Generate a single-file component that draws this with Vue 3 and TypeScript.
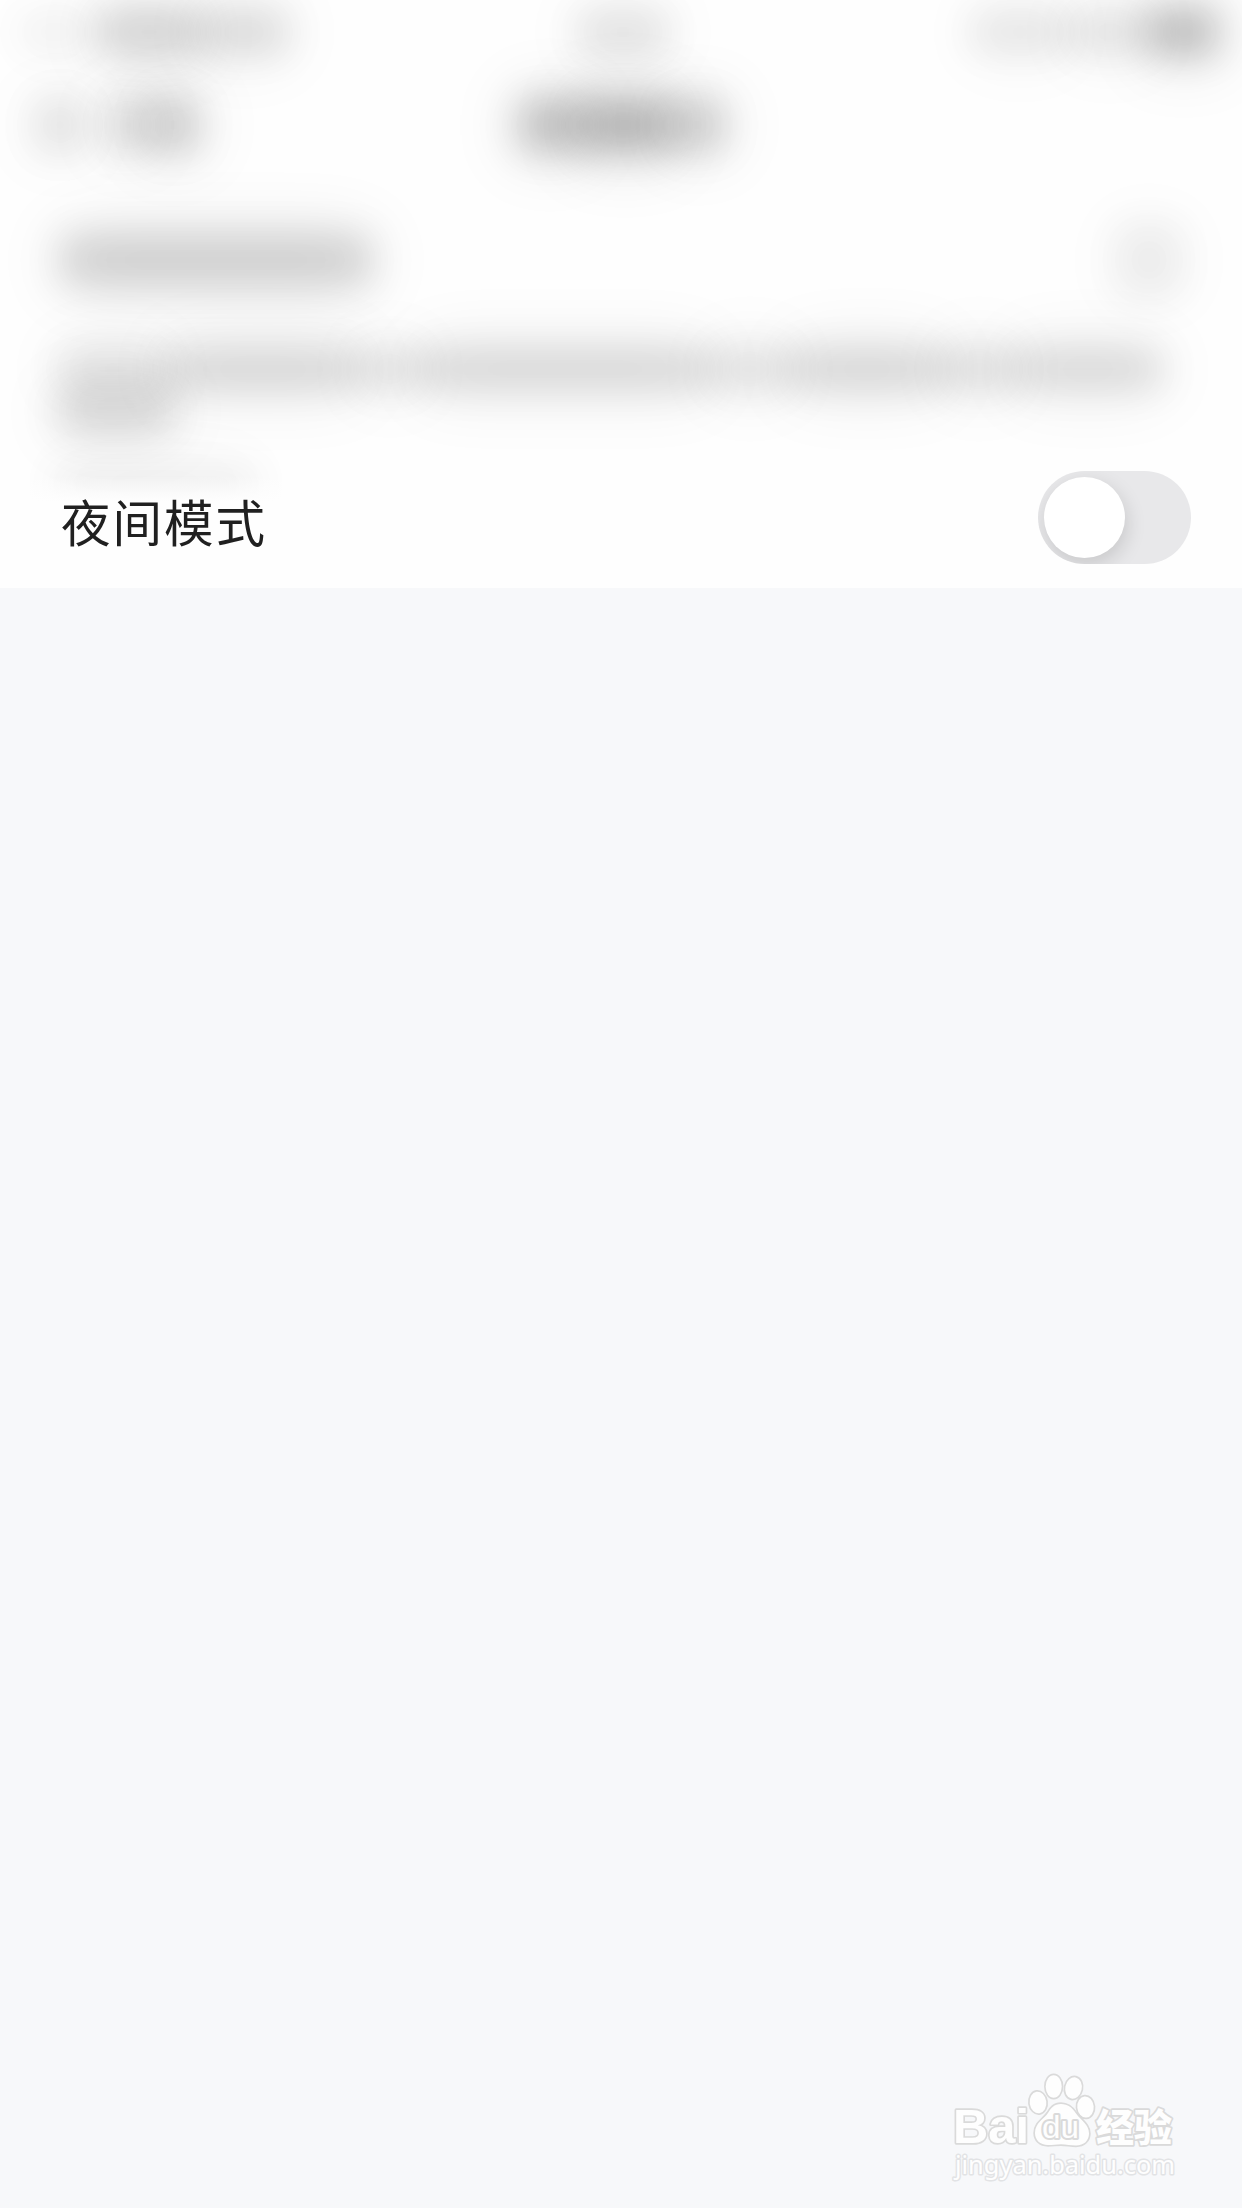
<script setup lang="ts">
import { ref } from 'vue'

interface Smudge {
  gap: number
  width: number
  height: number
  tone: number
}

interface HazeRow {
  height: number
  marks: Smudge[]
}

const nightMode = ref(false)

const hazeRows: HazeRow[] = [
  {
    height: 64,
    marks: [
      { gap: 20, width: 70, height: 34, tone: 0.05 },
      { gap: 8, width: 102, height: 42, tone: 0.16 },
      { gap: 0, width: 88, height: 42, tone: 0.125 },
      { gap: 290, width: 90, height: 38, tone: 0.11 },
      { gap: 304, width: 96, height: 38, tone: 0.09 },
      { gap: 0, width: 84, height: 38, tone: 0.1 },
      { gap: 0, width: 64, height: 42, tone: 0.27 },
    ],
  },
  {
    height: 122,
    marks: [
      { gap: 36, width: 48, height: 54, tone: 0.1 },
      { gap: 24, width: 40, height: 54, tone: 0.13 },
      { gap: 0, width: 50, height: 54, tone: 0.18 },
      { gap: 322, width: 60, height: 50, tone: 0.23 },
      { gap: 0, width: 90, height: 50, tone: 0.26 },
      { gap: 0, width: 54, height: 50, tone: 0.18 },
    ],
  },
  {
    height: 148,
    marks: [
      { gap: 61, width: 310, height: 50, tone: 0.152 },
      { gap: 745, width: 66, height: 74, tone: 0.055 },
    ],
  },
  {
    height: 70,
    marks: [
      { gap: 58, width: 108, height: 38, tone: 0.1 },
      { gap: 0, width: 194, height: 38, tone: 0.145 },
      { gap: 0, width: 60, height: 38, tone: 0.11 },
      { gap: 0, width: 290, height: 38, tone: 0.14 },
      { gap: 0, width: 80, height: 38, tone: 0.11 },
      { gap: 0, width: 154, height: 38, tone: 0.145 },
      { gap: 0, width: 70, height: 38, tone: 0.125 },
      { gap: 0, width: 148, height: 38, tone: 0.135 },
    ],
  },
  {
    height: 14,
    marks: [{ gap: 58, width: 116, height: 40, tone: 0.14 }],
  },
  {
    height: 132,
    marks: [{ gap: 56, width: 200, height: 26, tone: 0.075 }],
  },
]
</script>

<template>
  <main class="screen">
    <section class="panel">
      <div class="haze" aria-hidden="true">
        <div
          v-for="(row, r) in hazeRows"
          :key="r"
          class="haze-row"
          :style="{ height: row.height + 'px' }"
        >
          <span
            v-for="(mark, m) in row.marks"
            :key="m"
            class="smudge"
            :style="{
              marginLeft: mark.gap + 'px',
              width: mark.width + 'px',
              height: mark.height + 'px',
              '--tone': mark.tone,
            }"
          ></span>
        </div>
      </div>
      <div class="setting">
        <span class="label">夜间模式</span>
        <button
          class="switch"
          :class="{ on: nightMode }"
          role="switch"
          :aria-checked="nightMode"
          aria-label="夜间模式"
          @click="nightMode = !nightMode"
        >
          <span class="knob"></span>
        </button>
      </div>
    </section>

    <footer class="credit">
      <svg class="credit-mark" width="270" height="150" viewBox="0 0 270 150">
        <g class="outlined">
          <text class="latin" x="23" y="93" textLength="76" lengthAdjust="spacingAndGlyphs">Bai</text>
          <ellipse cx="108" cy="52.5" rx="8.3" ry="10.8" transform="rotate(-8 108 52.5)" />
          <ellipse cx="123.7" cy="36.5" rx="8" ry="11.2" />
          <ellipse cx="143.5" cy="38" rx="8.2" ry="10.8" transform="rotate(12 143.5 38)" />
          <ellipse cx="155.5" cy="57" rx="8.2" ry="10.6" transform="rotate(-5 155.5 57)" />
          <path d="M131 54c-7 0-10 4-13 9-4 6-13 10-13 20 0 7 5 12 13 12 5 0 8-.8 13-.8s10 1.300 15 1.300c8 0 13-5 13-12 0-9-8-13-13-20-4-6-8-9.500-15-9.500z" />
          <text class="paw-text" x="112" y="87.500" textLength="37" lengthAdjust="spacingAndGlyphs">du</text>
          <text class="hanzi" x="166" y="90.500" textLength="76" lengthAdjust="spacingAndGlyphs">经验</text>
        </g>
        <text class="site" x="25" y="123.500" textLength="220" lengthAdjust="spacingAndGlyphs">jingyan.baidu.com</text>
      </svg>
    </footer>
  </main>
</template>

<style>
body {
  margin: 0;
  background: #f7f8fa;
}
</style>

<style scoped>
.screen {
  display: flex;
  flex-direction: column;
  width: 1242px;
  height: 2208px;
  overflow: hidden;
  background: #f7f8fa;
  font-family: 'Noto Sans CJK SC', sans-serif;
}

.panel {
  display: flex;
  flex-direction: column;
  height: 588px;
  background: #fefefe;
}

.haze {
  height: 448px;
}

.haze-row {
  display: flex;
  align-items: center;
}

.smudge {
  position: relative;
  flex: none;
}

.smudge::before,
.smudge::after {
  content: '';
  position: absolute;
  inset: 0;
  background: #000;
}

.smudge::before {
  opacity: calc(var(--tone) * 0.82);
  filter: blur(19px);
}

.smudge::after {
  opacity: calc(var(--tone) * 0.75);
  filter: blur(36px);
}

.setting {
  display: flex;
  position: relative;
  flex: 1;
  align-items: center;
  justify-content: space-between;
  box-sizing: border-box;
  padding: 0 51px 1px 61px;
  background: linear-gradient(rgba(254, 254, 254, 0) 28px, #fefefe 54px);
}

.label {
  margin-top: 6px;
  color: #202020;
  font-size: 49.5px;
  line-height: 74px;
  letter-spacing: 2px;
}

.switch {
  display: flex;
  align-items: center;
  box-sizing: border-box;
  width: 153px;
  height: 93px;
  padding: 0 6px;
  border: 0;
  border-radius: 47px;
  overflow: hidden;
  background: #e8e8ea;
}

.switch.on {
  justify-content: flex-end;
  background: #4cd964;
}

.knob {
  width: 81px;
  height: 81px;
  border-radius: 50%;
  background: #fff;
  box-shadow: 2px 7px 20px rgba(0, 0, 0, 0.14);
}

.credit {
  display: flex;
  flex: 1;
  align-items: flex-end;
  justify-content: flex-end;
  padding: 0 42px 8px 0;
}

.outlined {
  fill: #fefefe;
  stroke: #dadada;
  stroke-width: 3.4px;
  stroke-linejoin: round;
  paint-order: stroke;
}

.latin {
  font: bold 49px 'Liberation Sans', sans-serif;
}

.paw-text {
  stroke-width: 4px;
  font: 31px 'Liberation Sans', sans-serif;
}

.hanzi {
  font: 900 38px 'Noto Sans CJK SC', sans-serif;
}

.site {
  fill: #fefefe;
  stroke: #e2e3e5;
  stroke-width: 3px;
  stroke-linejoin: round;
  paint-order: stroke;
  font: 26px 'Noto Sans', sans-serif;
}
</style>
